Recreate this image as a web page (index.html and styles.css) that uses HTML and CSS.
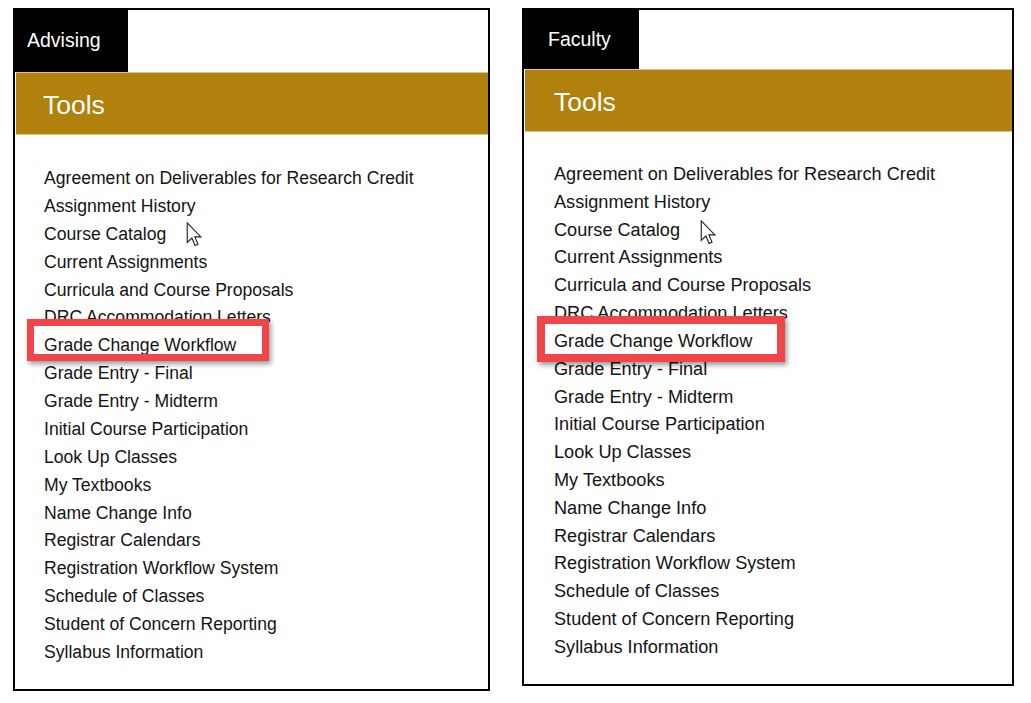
FILE: index.html
```html
<!DOCTYPE html>
<html lang="en">
<head>
<meta charset="utf-8">
<title>Tools</title>
<link rel="stylesheet" href="styles.css">
</head>
<body>
<div class="page">
  <section class="panel panel-left">
    <div class="tabs"><div class="tab">Advising</div></div>
    <div class="banner"><h2>Tools</h2></div>
    <ul class="tools">
      <li>Agreement on Deliverables for Research Credit</li>
      <li>Assignment History</li>
      <li>Course Catalog</li>
      <li>Current Assignments</li>
      <li>Curricula and Course Proposals</li>
      <li>DRC Accommodation Letters</li>
      <li class="hl">Grade Change Workflow</li>
      <li>Grade Entry - Final</li>
      <li>Grade Entry - Midterm</li>
      <li>Initial Course Participation</li>
      <li>Look Up Classes</li>
      <li>My Textbooks</li>
      <li>Name Change Info</li>
      <li>Registrar Calendars</li>
      <li>Registration Workflow System</li>
      <li>Schedule of Classes</li>
      <li>Student of Concern Reporting</li>
      <li>Syllabus Information</li>
    </ul>
    <svg class="cursor" viewBox="0 0 13 20" width="17" height="25" aria-hidden="true">
      <path d="M0.7 0.7 V16.3 L4.4 12.8 L7 18.8 L9.3 17.8 L6.8 11.9 H11.6 Z" fill="#fff" stroke="#222" stroke-width="0.9" stroke-linejoin="miter"/>
    </svg>
  </section>
  <section class="panel panel-right">
    <div class="tabs"><div class="tab">Faculty</div></div>
    <div class="banner"><h2>Tools</h2></div>
    <ul class="tools">
      <li>Agreement on Deliverables for Research Credit</li>
      <li>Assignment History</li>
      <li>Course Catalog</li>
      <li>Current Assignments</li>
      <li>Curricula and Course Proposals</li>
      <li>DRC Accommodation Letters</li>
      <li class="hl">Grade Change Workflow</li>
      <li>Grade Entry - Final</li>
      <li>Grade Entry - Midterm</li>
      <li>Initial Course Participation</li>
      <li>Look Up Classes</li>
      <li>My Textbooks</li>
      <li>Name Change Info</li>
      <li>Registrar Calendars</li>
      <li>Registration Workflow System</li>
      <li>Schedule of Classes</li>
      <li>Student of Concern Reporting</li>
      <li>Syllabus Information</li>
    </ul>
    <svg class="cursor" viewBox="0 0 13 20" width="17" height="25" aria-hidden="true">
      <path d="M0.7 0.7 V16.3 L4.4 12.8 L7 18.8 L9.3 17.8 L6.8 11.9 H11.6 Z" fill="#fff" stroke="#222" stroke-width="0.9" stroke-linejoin="miter"/>
    </svg>
  </section>
</div>
</body>
</html>
```
FILE: styles.css
```css
*, *::before, *::after { box-sizing: border-box; }

html, body {
  margin: 0;
  padding: 0;
  background: #ffffff;
}

body {
  font-family: "Liberation Sans", Arial, sans-serif;
  color: #141414;
}

.page {
  display: flex;
  align-items: flex-start;
  gap: 32px;
  padding: 8px 0 0 13px;
}

.panel {
  position: relative;
  border: 2px solid #000;
  background: #fff;
  display: flex;
  flex-direction: column;
}

.panel-left { width: 477px; }
.panel-right { width: 492px; }

.tabs {
  display: flex;
}

.tab {
  background: #000;
  color: #fff;
  font-size: 19.5px;
  display: flex;
  align-items: center;
}

.panel-left .tab {
  width: 113px;
  height: 62px;
  padding: 0 0 2px 12px;
}

.panel-right .tab {
  width: 115px;
  height: 59px;
  padding: 0 0 1px 24px;
}

.banner {
  margin-left: 1px;
  height: 63px;
  background: #b1800d;
  border-top: 1px solid #dcc48c;
  border-bottom: 1px solid #dcc48c;
  display: flex;
  align-items: center;
  padding: 4px 0 0 27px;
}

.panel-right .banner { padding-left: 29px; }

.banner h2 {
  margin: 0;
  font-size: 26.5px;
  font-weight: normal;
  color: #fff;
}

.tools {
  list-style: none;
  margin: 0;
}

.panel-left .tools {
  padding: 30px 0 22px 29px;
  font-size: 17.6px;
  line-height: 27.88px;
}

.panel-right .tools {
  padding: 29px 0 22px 30px;
  font-size: 18.15px;
  line-height: 27.82px;
}

.tools li {
  white-space: nowrap;
}

.tools .hl {
  position: relative;
}

.tools .hl::after {
  content: "";
  position: absolute;
  z-index: 2;
  border: 7px solid #f2454a;
  box-shadow: 2px 3px 5px rgba(0, 0, 0, 0.4);
}

.panel-left .hl::after {
  left: -17px;
  top: -13px;
  width: 242px;
  height: 42px;
}

.panel-right .hl::after {
  left: -17px;
  top: -12px;
  width: 248px;
  height: 46px;
  border-width: 8px;
}

.cursor {
  position: absolute;
  z-index: 3;
}

.panel-left .cursor { left: 171px; top: 212px; }
.panel-right .cursor { left: 176px; top: 210px; }
```
